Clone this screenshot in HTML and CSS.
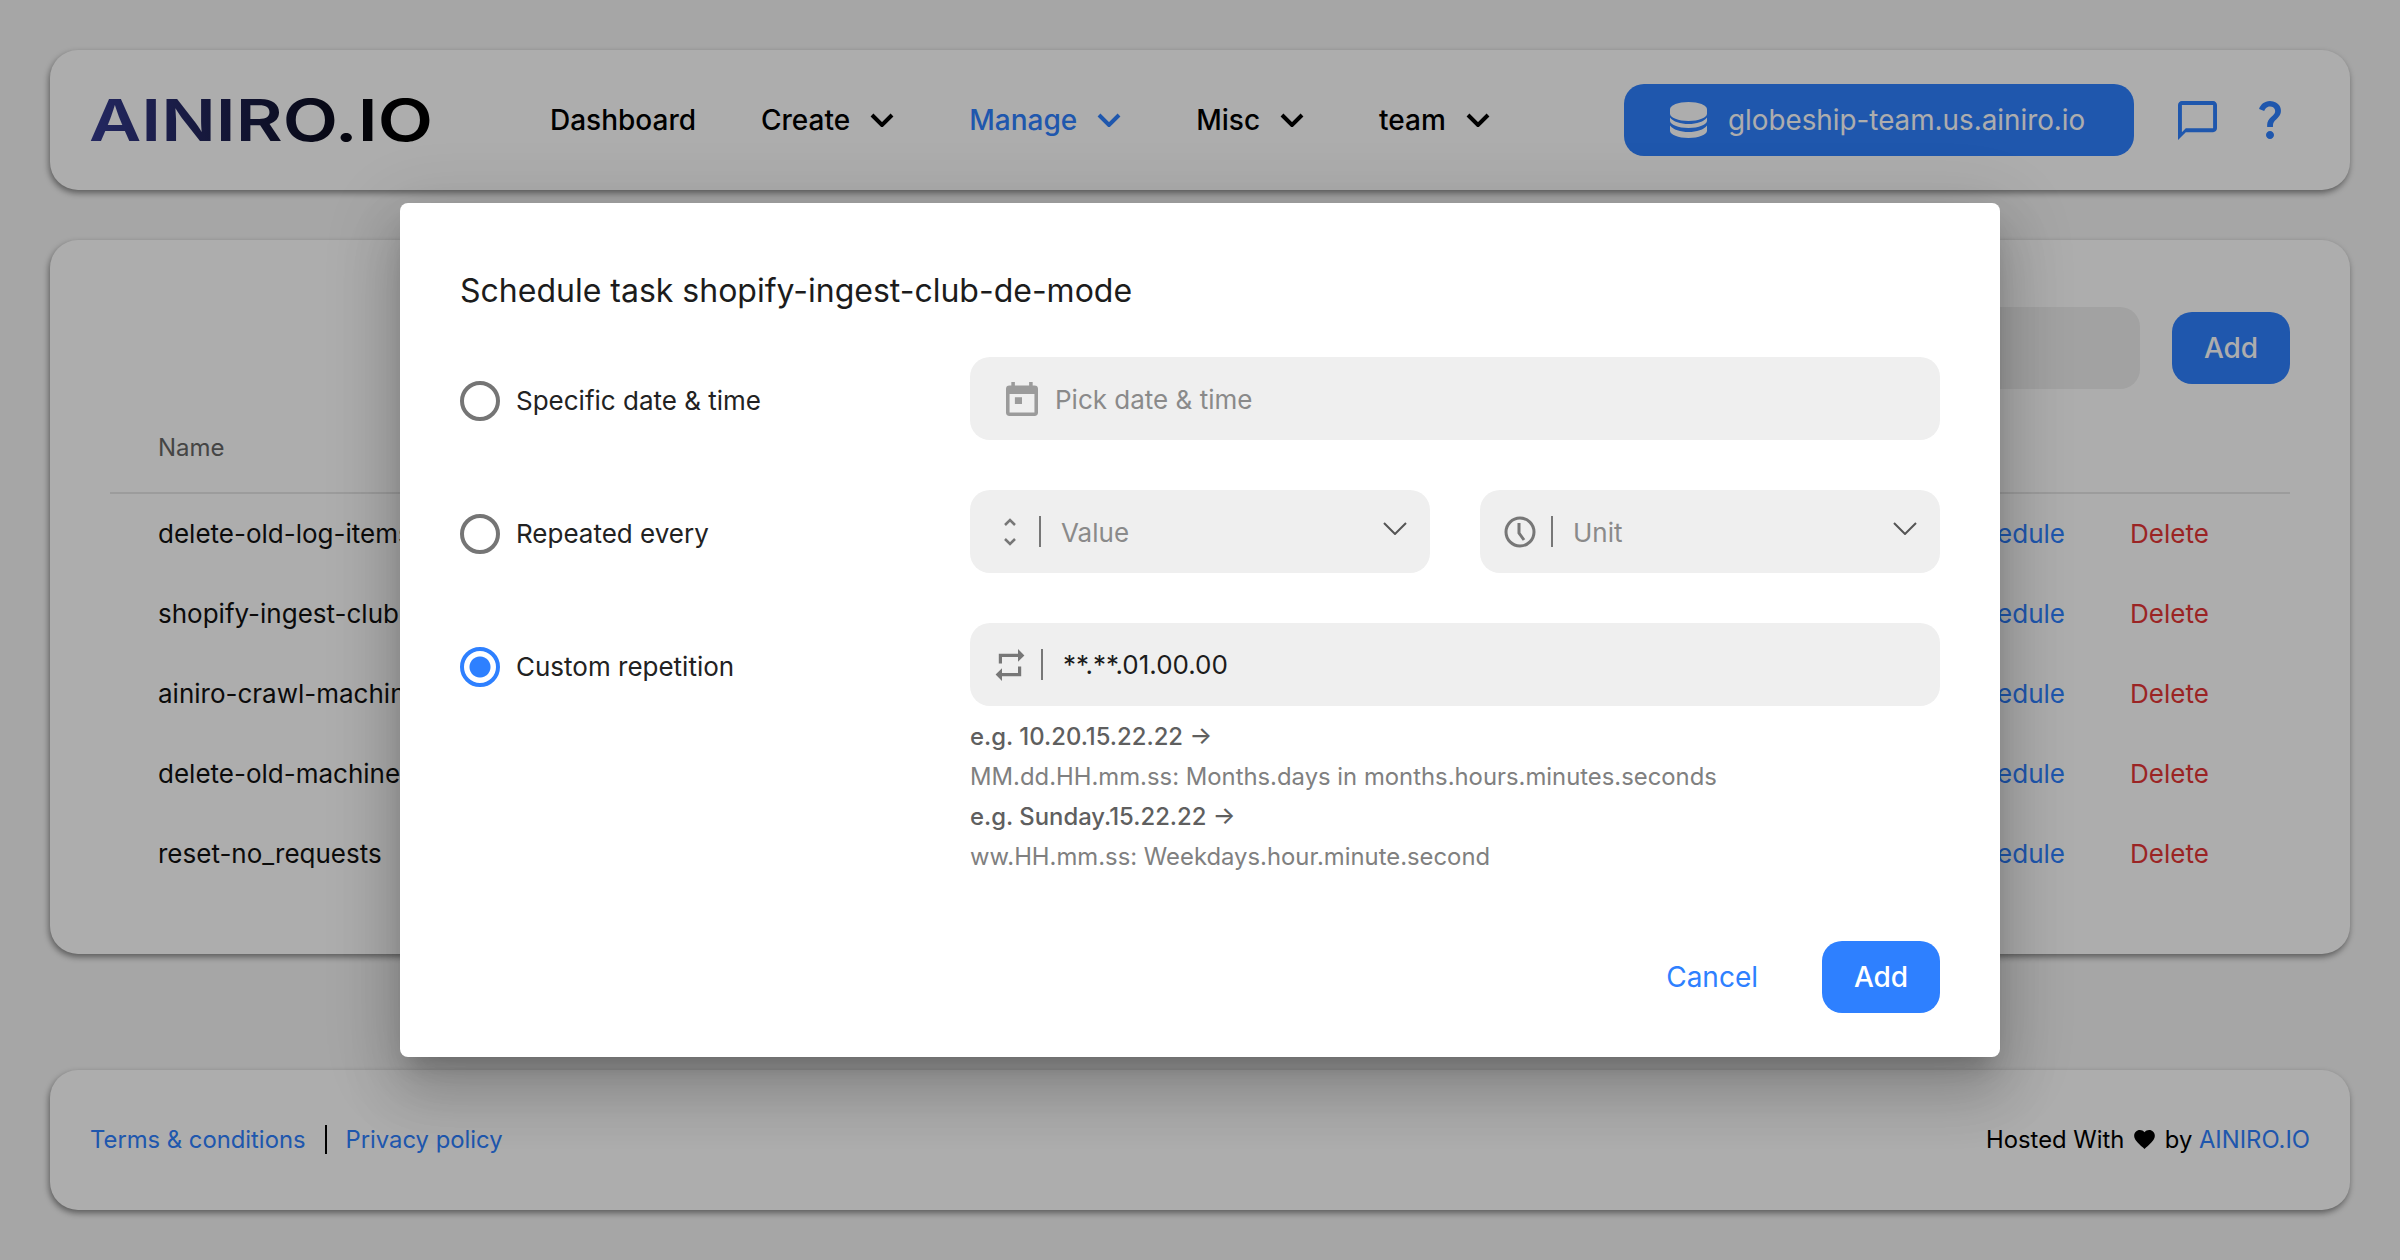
FILE: index.html
```html
<!DOCTYPE html>
<html lang="en">
<head>
  <meta charset="UTF-8" />
  <title>Tasks</title>
  <link rel="stylesheet" href="styles.css">
</head>
<body>
  <header class="topbar card">
    <div class="logo"><span>AINIRO.IO</span></div>
    <nav class="nav">
      <a class="nav-item nav-dashboard">Dashboard</a>
      <a class="nav-item nav-create">Create <svg class="nav-chevron" viewBox="0 0 24 14"><path d="M2 2l10 10L22 2"/></svg></a>
      <a class="nav-item nav-manage active">Manage <svg class="nav-chevron" viewBox="0 0 24 14"><path d="M2 2l10 10L22 2"/></svg></a>
      <a class="nav-item nav-misc">Misc <svg class="nav-chevron" viewBox="0 0 24 14"><path d="M2 2l10 10L22 2"/></svg></a>
      <a class="nav-item nav-team">team <svg class="nav-chevron" viewBox="0 0 24 14"><path d="M2 2l10 10L22 2"/></svg></a>
    </nav>
    <div class="cloudlet">
      <svg class="db-icon" viewBox="0 0 37 36">
        <path d="M18.5 0C28.7 0 37 3.2 37 7.2v4.6C37 15.8 28.7 19 18.5 19S0 15.8 0 11.8V7.2C0 3.2 8.300 0 18.5 0z"/>
        <path d="M0 15.500C3 19.800 10.500 22 18.500 22S34 19.800 37 15.500v3.300C37 22.800 28.700 26 18.500 26S0 22.800 0 18.800z"/>
        <path d="M0 23.500C3 27.800 10.500 30 18.500 30S34 27.800 37 23.500v5.300C37 32.800 28.700 36 18.500 36S0 32.800 0 28.800z"/>
      </svg>
      <span>globeship-team.us.ainiro.io</span>
    </div>
    <svg class="chat-icon" viewBox="2 2 20 20"><path d="M20 2H4c-1.100 0-2 .9-2 2v18l4-4h14c1.100 0 2-.9 2-2V4c0-1.100-.9-2-2-2zm0 14H6l-2 2V4h16v12z"/></svg>
    <svg class="help-icon" viewBox="6 3 12 19"><path d="M11.070 12.850c.77-1.390 2.250-2.210 3.110-3.440.91-1.290.4-3.700-2.180-3.700-1.690 0-2.520 1.280-2.870 2.340L6.540 6.960C7.250 4.830 9.180 3 11.990 3c2.350 0 3.960 1.070 4.780 2.410.7 1.150 1.110 3.300.03 4.900-1.200 1.770-2.350 2.310-2.970 3.450-.25.46-.35.76-.35 2.240h-2.890c-.01-.78-.13-2.050.48-3.150zM14 20c0 1.100-.9 2-2 2s-2-.9-2-2 .9-2 2-2 2 .9 2 2z"/></svg>
  </header>

  <main class="tasks card">
    <div class="toolbar">
      <div class="search"></div>
      <button class="btn btn-add">Add</button>
    </div>
    <div class="table-head">Name</div>
    <div class="task-row"><span class="task-name">delete-old-log-items</span><a class="task-schedule">Schedule</a><a class="task-delete">Delete</a></div>
    <div class="task-row"><span class="task-name">shopify-ingest-club-de-mode</span><a class="task-schedule">Schedule</a><a class="task-delete">Delete</a></div>
    <div class="task-row"><span class="task-name">ainiro-crawl-machine</span><a class="task-schedule">Schedule</a><a class="task-delete">Delete</a></div>
    <div class="task-row"><span class="task-name">delete-old-machine</span><a class="task-schedule">Schedule</a><a class="task-delete">Delete</a></div>
    <div class="task-row"><span class="task-name">reset-no_requests</span><a class="task-schedule">Schedule</a><a class="task-delete">Delete</a></div>
  </main>

  <footer class="footer card">
    <div class="footer-links">
      <a>Terms &amp; conditions</a>
      <span class="footer-sep"></span>
      <a>Privacy policy</a>
    </div>
    <div class="hosted">
      Hosted With
      <svg class="heart" viewBox="2 3 20 18.400"><path d="M12 21.350l-1.450-1.320C5.400 15.360 2 12.280 2 8.500 2 5.420 4.420 3 7.500 3c1.740 0 3.410.81 4.500 2.090C13.090 3.810 14.760 3 16.500 3 19.580 3 22 5.420 22 8.500c0 3.780-3.400 6.860-8.550 11.540L12 21.350z"/></svg>
      by <a>AINIRO.IO</a>
    </div>
  </footer>

  <div class="backdrop">
    <div class="dialog">
      <h2 class="dialog-title">Schedule task shopify-ingest-club-de-mode</h2>
      <div class="form-row">
        <label class="radio"><span class="radio-mark"></span><span class="radio-text">Specific date &amp; time</span></label>
        <div class="field field-date">
          <svg class="field-icon icon-calendar" viewBox="3 2 18 20" preserveAspectRatio="none"><path d="M19 4h-1V2h-2v2H8V2H6v2H5a2 2 0 0 0-2 2v14a2 2 0 0 0 2 2h14a2 2 0 0 0 2-2V6a2 2 0 0 0-2-2zm0 16H5V9h14v11zM8 11h4v4H8z"/></svg>
          <span class="placeholder">Pick date &amp; time</span>
        </div>
      </div>
      <div class="form-row">
        <label class="radio"><span class="radio-mark"></span><span class="radio-text">Repeated every</span></label>
        <div class="field-pair">
          <div class="field">
            <svg class="field-icon icon-unfold" viewBox="0 0 14 28"><path d="M2 7l5-5 5 5M2 21l5 5 5-5"/></svg>
            <span class="field-sep"></span>
            <span class="placeholder">Value</span>
            <svg class="select-arrow" viewBox="0 0 24 13"><path d="M1 1l11 11L23 1"/></svg>
          </div>
          <div class="field">
            <svg class="field-icon icon-clock" viewBox="0 0 32 32"><circle cx="16" cy="16" r="14"/><path d="M15 7v10l5 7"/></svg>
            <span class="field-sep"></span>
            <span class="placeholder">Unit</span>
            <svg class="select-arrow" viewBox="0 0 24 13"><path d="M1 1l11 11L23 1"/></svg>
          </div>
        </div>
      </div>
      <div class="form-row">
        <label class="radio checked"><span class="radio-mark"></span><span class="radio-text">Custom repetition</span></label>
        <div class="field">
          <svg class="field-icon icon-repeat" viewBox="3 2 18 20"><path d="M7 7h10v3l4-4-4-4v3H5v6h2V7zm10 10H7v-3l-4 4 4 4v-3h12v-6h-2v4z"/></svg>
          <span class="field-sep"></span>
          <span class="value">**.**.01.00.00</span>
        </div>
      </div>
      <div class="hints">
        <div class="hint-bold">e.g. 10.20.15.22.22 →</div>
        <div>MM.dd.HH.mm.ss: Months.days in months.hours.minutes.seconds</div>
        <div class="hint-bold">e.g. Sunday.15.22.22 →</div>
        <div>ww.HH.mm.ss: Weekdays.hour.minute.second</div>
      </div>
      <div class="dialog-actions">
        <button class="btn-text">Cancel</button>
        <button class="btn">Add</button>
      </div>
    </div>
  </div>
</body>
</html>
```

FILE: styles.css
```css
* {
  box-sizing: border-box;
}
body {
  margin: 0;
  padding: 50px;
  height: 1260px;
  overflow: hidden;
  position: relative;
  background-color: #f5f5f5;
  color: #111;
  font-family: Inter, "Liberation Sans", sans-serif;
  font-size: 26px;
}
a {
  color: #2e80ff;
}

.card {
  background-color: #fff;
  border-radius: 28px;
  box-shadow: -1px 3px 6px rgba(0, 0, 0, 0.45);
}

/* top bar */
.topbar {
  height: 140px;
  display: flex;
  align-items: center;
  padding: 0 68px 0 39px;
}
.logo {
  width: 340px;
  font-size: 58px;
  font-weight: 600;
  line-height: 1;
  white-space: nowrap;
}
.logo span {
  display: inline-block;
  transform: scaleX(1.24);
  transform-origin: left center;
  background: linear-gradient(90deg, #353b90, #000 90%);
  -webkit-background-clip: text;
  background-clip: text;
  color: transparent;
}
.nav {
  display: flex;
  align-items: center;
  margin-left: 121px;
  font-size: 28px;
  font-weight: 500;
}
.nav-item {
  display: flex;
  align-items: center;
  color: #000;
  white-space: nowrap;
}
.nav-item.active {
  color: #2e80ff;
}
.nav-chevron {
  width: 24px;
  height: 14px;
  margin-left: 20px;
  margin-right: 75px;
  fill: none;
  stroke: currentColor;
  stroke-width: 4;
}
.nav-dashboard {
  margin-right: 65px;
}
.cloudlet {
  margin-left: auto;
  width: 510px;
  height: 72px;
  display: flex;
  align-items: center;
  gap: 21px;
  padding-left: 46px;
  border-radius: 20px;
  background-color: #2e80ff;
  color: #fff;
  font-size: 27.800px;
}
.db-icon {
  width: 37px;
  height: 36px;
  fill: #fff;
}
.chat-icon {
  width: 39px;
  height: 39px;
  margin-left: 44px;
  fill: #2e80ff;
}
.help-icon {
  width: 24px;
  height: 38px;
  margin-left: 41px;
  fill: #2e80ff;
}

/* tasks table */
.tasks {
  height: 714px;
  margin-top: 50px;
  padding: 67px 60px 0;
}
.toolbar {
  display: flex;
  align-items: center;
  justify-content: flex-end;
  gap: 32px;
}
.search {
  width: 1600px;
  height: 82px;
  border-radius: 20px;
  background-color: #efefef;
}
.table-head {
  height: 105px;
  padding: 41px 48px 0;
  border-bottom: 2px solid #e6e6e6;
  color: #666;
  font-size: 24px;
  line-height: 36px;
}
.task-row {
  height: 80px;
  display: flex;
  align-items: center;
  padding: 0 0 2px 48px;
}
.task-name {
  flex: 1;
}
.task-delete {
  color: #e53535;
  width: 160px;
  margin-left: 65px;
}

/* footer */
.footer {
  height: 140px;
  margin-top: 116px;
  padding: 0 40px 2px;
  display: flex;
  align-items: center;
  justify-content: space-between;
  font-size: 23.800px;
}
.footer-links {
  display: flex;
  align-items: center;
}
.footer-sep {
  width: 2px;
  height: 29px;
  margin: 0 19px;
  background-color: #000;
}
.hosted {
  color: #000;
}
.heart {
  width: 21px;
  height: 19px;
  margin: 0 3px;
  vertical-align: -1px;
}

/* buttons */
.btn {
  width: 118px;
  height: 72px;
  border: none;
  border-radius: 20px;
  background-color: #2e80ff;
  color: #fff;
  font-family: inherit;
  font-size: 28px;
  font-weight: 500;
}
.btn-text {
  border: none;
  background: none;
  padding: 0;
  color: #2e80ff;
  font-family: inherit;
  font-size: 28px;
  font-weight: 400;
}

/* dialog */
.backdrop {
  position: absolute;
  inset: 0;
  display: flex;
  align-items: center;
  justify-content: center;
  background-color: rgba(0, 0, 0, 0.32);
}
.dialog {
  width: 1600px;
  height: 854px;
  padding: 66px 60px 44px;
  border-radius: 8px;
  background-color: #fff;
  box-shadow: 0 16px 22px -10px rgba(0, 0, 0, 0.2), 0 36px 57px 4px rgba(0, 0, 0, 0.14), 0 14px 70px 12px rgba(0, 0, 0, 0.12);
}
.dialog-title {
  margin: 0 0 44px;
  font-size: 32px;
  font-weight: 400;
  line-height: 44px;
  color: #1c1c1c;
}
.form-row {
  display: grid;
  grid-template-columns: 510px 970px;
  align-items: center;
  margin-bottom: 50px;
}
.radio {
  display: flex;
  align-items: center;
  gap: 16px;
  margin-top: 5px;
  color: #222;
}
.radio-text {
  margin-top: -2px;
}
.radio-mark {
  width: 40px;
  height: 40px;
  border: 4px solid #757575;
  border-radius: 50%;
}
.radio.checked .radio-mark {
  border-color: #2e80ff;
  background: radial-gradient(circle, #2e80ff 0 10px, transparent 11px);
}
.field {
  height: 83px;
  display: flex;
  align-items: center;
  position: relative;
  padding-left: 23.500px;
  border-radius: 20px;
  background-color: #efefef;
}
.field-pair {
  display: grid;
  grid-template-columns: 1fr 1fr;
  gap: 50px;
}
.field-date {
  padding-left: 36px;
}
.field-icon {
  flex: none;
  width: 32px;
  height: 32px;
}
.icon-calendar {
  height: 34px;
  fill: #9b9b9b;
}
.icon-unfold {
  width: 14px;
  height: 28px;
  margin: 0 7px 0 9px;
  fill: none;
  stroke: #777;
  stroke-width: 2.500;
}
.icon-clock {
  fill: none;
  stroke: #777;
  stroke-width: 3;
}
.icon-repeat {
  fill: #777;
}
.field-sep {
  flex: none;
  width: 2px;
  height: 31px;
  margin: 0 20.500px 0 15px;
  background-color: #777;
}
.placeholder {
  padding-top: 2px;
  color: #8a8a8a;
}
.field-date .placeholder {
  margin-left: 17px;
}
.value {
  color: #1c1c1c;
}
.select-arrow {
  position: absolute;
  top: 32px;
  right: 23px;
  width: 24px;
  height: 13px;
  fill: none;
  stroke: #555;
  stroke-width: 2;
}
.hints {
  margin: -39px 0 0 510px;
  color: #808080;
  font-size: 23.850px;
  line-height: 40px;
}
.hint-bold {
  color: #5f5f5f;
  font-weight: 500;
}
.dialog-actions {
  display: flex;
  align-items: center;
  justify-content: flex-end;
  gap: 64px;
  margin-top: 64px;
}
```
